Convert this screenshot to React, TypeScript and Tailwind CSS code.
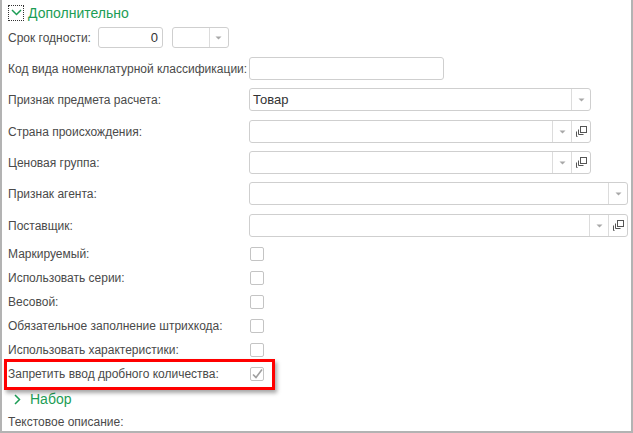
import React from "react";

const GREEN = "text-[#1c9d55]";

function Arrow() {
    return (
        <svg width="7" height="4" viewBox="0 0 7 4">
            <path d="M0.5 0.5 L6.5 0.5 L3.5 3.5 Z" fill="#a8a8a8" />
        </svg>
    );
}

function CopyIcon() {
    return (
        <svg width="11" height="11" viewBox="0 0 11 11" fill="none" stroke="#555" strokeWidth="1">
            <rect x="4.5" y="0.5" width="6" height="6" />
            <path d="M2.5 3.5 V8.5 H7.5" />
            <path d="M0.5 5.5 V10.5 H1.5" />
        </svg>
    );
}

function Field({
    width,
    value,
    dropdown,
    open,
}: {
    width: number;
    value?: string;
    dropdown?: boolean;
    open?: boolean;
}) {
    return (
        <div
            className="flex h-[23px] rounded-[3px] border border-[#cfcfcf] bg-white"
            style={{ width }}
        >
            <div className="flex flex-1 items-center px-[3px] text-[13px] text-[#333]">{value}</div>
            {dropdown && (
                <div className="flex w-[19px] items-center justify-center border-l border-[#dcdcdc]">
                    <Arrow />
                </div>
            )}
            {open && (
                <div className="flex w-[19px] items-center justify-center border-l border-[#dcdcdc]">
                    <CopyIcon />
                </div>
            )}
        </div>
    );
}

function Row({ label, top, children }: { label: string; top: number; children?: React.ReactNode }) {
    return (
        <div className="flex h-[23px] items-center" style={{ marginTop: top }}>
            <div className="w-[241px] shrink-0 whitespace-nowrap text-[12px] text-[#4a4a4a]">{label}</div>
            {children}
        </div>
    );
}

function Check({ label, checked }: { label: string; checked?: boolean }) {
    return (
        <div className="flex h-[24px] items-center">
            <div className="w-[242px] shrink-0 whitespace-nowrap text-[12px] text-[#4a4a4a]">{label}</div>
            <div className="flex h-[14px] w-[14px] items-center justify-center rounded-[2px] border border-[#c4c4c4] bg-white">
                {checked && (
                    <svg width="12" height="12" viewBox="0 0 12 12" fill="none">
                        <path d="M2 6.5 L5 9.5 L11 1.5" stroke="#a0a0a0" strokeWidth="1.6" />
                    </svg>
                )}
            </div>
        </div>
    );
}

export default function App() {
    return (
        <div
            className="relative h-[433px] w-[633px] overflow-hidden border-b-2 border-l-2 border-r-2 border-[#b3b3b3] bg-white pl-[6px]"
            style={{ fontFamily: '"Liberation Sans", Arial, sans-serif' }}
        >
            {/* Group header */}
            <div className="mt-[4px] flex h-[17px] items-center">
                <div className="flex h-[16px] w-[16px] items-center justify-center border border-dotted border-[#333]">
                    <svg width="11" height="7" viewBox="0 0 11 7" fill="none">
                        <path d="M1 1 L5.5 5.5 L10 1" stroke="#1c9d55" strokeWidth="1.5" />
                    </svg>
                </div>
                <span className={`ml-[4px] text-[14px] leading-none ${GREEN}`}>Дополнительно</span>
            </div>

            {/* Срок годности */}
            <div className="mt-[6px] flex h-[21px] items-center">
                <span className="text-[12px] text-[#4a4a4a]">Срок годности:</span>
                <div className="ml-[7px] flex h-[21px] w-[65px] items-center justify-end rounded-[3px] border border-[#cfcfcf] px-[4px] text-[13px] text-[#333]">
                    0
                </div>
                <div className="ml-[9px] flex h-[21px] w-[57px] rounded-[3px] border border-[#cfcfcf]">
                    <div className="flex-1" />
                    <div className="flex w-[19px] items-center justify-center border-l border-[#dcdcdc]">
                        <Arrow />
                    </div>
                </div>
            </div>

            <Row label="Код вида номенклатурной классификации:" top={9}>
                <Field width={195} />
            </Row>
            <Row label="Признак предмета расчета:" top={8}>
                <Field width={342} value="Товар" dropdown />
            </Row>
            <Row label="Страна происхождения:" top={9}>
                <Field width={342} dropdown open />
            </Row>
            <Row label="Ценовая группа:" top={8}>
                <Field width={342} dropdown open />
            </Row>
            <Row label="Признак агента:" top={8}>
                <Field width={379} dropdown />
            </Row>
            <Row label="Поставщик:" top={9}>
                <Field width={379} dropdown open />
            </Row>

            <div className="mt-[5px]">
                <Check label="Маркируемый:" />
                <Check label="Использовать серии:" />
                <Check label="Весовой:" />
                <Check label="Обязательное заполнение штрихкода:" />
                <Check label="Использовать характеристики:" />
                <Check label="Запретить ввод дробного количества:" checked />
            </div>

            <div className="mt-[3px] flex h-[20px] items-center">
                <svg className="ml-[6px]" width="7" height="11" viewBox="0 0 7 11" fill="none">
                    <path d="M1 1 L5.5 5.5 L1 10" stroke="#1c9d55" strokeWidth="1.5" />
                </svg>
                <span className={`ml-[9px] text-[14px] leading-none ${GREEN}`}>Набор</span>
            </div>
            <div className="mt-[4px] flex h-[18px] items-center text-[12px] text-[#4a4a4a]">Текстовое описание:</div>

            {/* Highlight frame */}
            <div className="absolute left-[2px] top-[359px] h-[31px] w-[271px] border-[3px] border-[#ff0000] shadow-[2px_3px_4px_rgba(0,0,0,0.35)]" />
        </div>
    );
}
